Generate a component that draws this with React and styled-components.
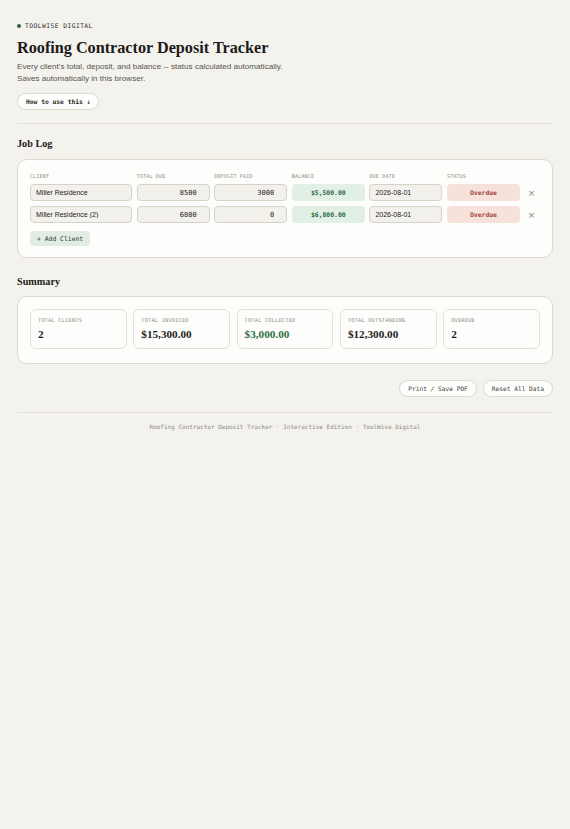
import React, { useState } from 'react'
import styled, { createGlobalStyle } from 'styled-components'

const GlobalStyle = createGlobalStyle`
  body {
    margin: 0;
    background: #f4f2ed;
    color: #1d1d1b;
    font-family: "Liberation Sans", Arial, sans-serif;
  }
`;

const mono = `"DejaVu Sans Mono", "Liberation Mono", monospace`;
const serif = `"Liberation Serif", "Times New Roman", serif`;

const Page = styled.div`
  padding: 22px 17px 40px;
`;

const Brand = styled.div`
  display: flex;
  align-items: center;
  gap: 4px;
  font-family: ${mono};
  font-size: 6.3px;
  letter-spacing: 0.45px;
  color: #2b2b28;
`;

const Dot = styled.span`
  width: 4px;
  height: 4px;
  border-radius: 50%;
  background: #2f5e43;
`;

const Title = styled.h1`
  font-family: ${serif};
  font-weight: 700;
  font-size: 16.2px;
  margin: 10px 0 3px;
  color: #1b1b19;
`;

const Lead = styled.p`
  font-size: 8.1px;
  line-height: 12px;
  color: #555450;
  margin: 0 0 5px;
`;

const PillButton = styled.button`
  font-family: ${mono};
  font-size: ${p => p.$bold ? '6.3px' : '6.2px'};
  font-weight: ${p => p.$bold ? 700 : 400};
  color: ${p => p.$bold ? '#1f1f1d' : '#45443f'};
  background: #fdfdfb;
  border: 1px solid #dcd8cc;
  border-radius: 10px;
  padding: 0 8px;
  height: 17px;
  cursor: pointer;
`;

const Divider = styled.hr`
  border: none;
  border-top: 1px solid #e2dfd6;
  margin: ${p => p.$m || '13px 0 0'};
`;

const SectionTitle = styled.h2`
  font-family: ${serif};
  font-weight: 700;
  font-size: 10.2px;
  margin: ${p => p.$m || '14px 0 10px'};
  color: #1b1b19;
`;

const Card = styled.div`
  background: #fdfdfb;
  border: 1px solid #ddd9cc;
  border-radius: 10px;
  padding: ${p => p.$pad || '12px'};
`;

const Grid = styled.div`
  display: grid;
  grid-template-columns: 102px 73px 73px 73px 73px 73px 14px;
  column-gap: 4.6px;
  row-gap: 5px;
  align-items: center;
`;

const HeadCell = styled.div`
  font-family: ${mono};
  font-size: 5px;
  letter-spacing: 0.2px;
  color: #8d8b84;
  line-height: 6px;
`;

const Field = styled.input`
  box-sizing: border-box;
  width: 100%;
  height: 17px;
  background: #f3f1eb;
  border: 1px solid #d6d2c6;
  border-radius: 4px;
  font-family: ${p => p.$mono ? mono : `"Liberation Sans", Arial, sans-serif`};
  font-size: 7px;
  text-align: ${p => p.$right ? 'right' : 'left'};
  padding: 0 ${p => p.$right ? '12px' : '5px'} 0 5px;
  color: #22221f;
  outline: none;
`;

const Chip = styled.div`
  height: 17px;
  border-radius: 4px;
  display: flex;
  align-items: center;
  justify-content: center;
  font-family: ${mono};
  font-size: 6.4px;
  font-weight: 700;
  background: ${p => p.$tone === 'bad' ? '#f6e1db' : '#e2efe5'};
  color: ${p => p.$tone === 'bad' ? '#a1443a' : '#2e6c48'};
`;

const RemoveBtn = styled.button`
  background: none;
  border: none;
  color: #8a8882;
  font-size: 9px;
  padding: 0;
  text-align: center;
  cursor: pointer;
  font-family: "DejaVu Sans", sans-serif;
`;

const AddButton = styled.button`
  margin-top: 8px;
  height: 15px;
  padding: 0 7px;
  font-family: ${mono};
  font-size: 6.4px;
  color: #2a3a30;
  background: #e1ece4;
  border: none;
  border-radius: 4px;
  cursor: pointer;
`;

const Stats = styled.div`
  display: grid;
  grid-template-columns: repeat(5, 1fr);
  gap: 6.5px;
`;

const Stat = styled.div`
  border: 1px solid #e3e0d7;
  border-radius: 6px;
  padding: 7px;
  height: 40px;
  box-sizing: border-box;
`;

const StatLabel = styled.div`
  font-family: ${mono};
  font-size: 5.3px;
  letter-spacing: 0.2px;
  color: #8d8b84;
`;

const StatValue = styled.div`
  font-family: ${serif};
  font-weight: 700;
  font-size: 11.2px;
  margin-top: 5px;
  color: ${p => p.$green ? '#2f7047' : '#1d1d1b'};
`;

const Actions = styled.div`
  display: flex;
  justify-content: flex-end;
  gap: 6px;
  margin-top: 16px;
`;

const Footer = styled.div`
  text-align: center;
  font-family: ${mono};
  font-size: 6px;
  color: #8d8b84;
  margin-top: 10px;
`;

const money = n => '$' + n.toLocaleString('en-US', { minimumFractionDigits: 2, maximumFractionDigits: 2 });

const initial = [
  { id: 1, client: 'Miller Residence', total: 8500, deposit: 3000, due: '2026-08-01' },
  { id: 2, client: 'Miller Residence (2)', total: 6800, deposit: 0, due: '2026-08-01' },
];

export default function App() {
  const [rows, setRows] = useState(initial);

  const update = (id, key, val) =>
    setRows(rs => rs.map(r => (r.id === id ? { ...r, [key]: val } : r)));

  const invoiced = rows.reduce((s, r) => s + Number(r.total || 0), 0);
  const collected = rows.reduce((s, r) => s + Number(r.deposit || 0), 0);

  return (
    <Page>
      <GlobalStyle />
      <Brand><Dot />TOOLWISE DIGITAL</Brand>
      <Title>Roofing Contractor Deposit Tracker</Title>
      <Lead>
        Every client's total, deposit, and balance -- status calculated automatically.
        <br />
        Saves automatically in this browser.
      </Lead>
      <PillButton $bold>How to use this ↓</PillButton>
      <Divider />

      <SectionTitle>Job Log</SectionTitle>
      <Card $pad="13px 12px 11px">
        <Grid>
          <HeadCell>CLIENT</HeadCell>
          <HeadCell>TOTAL DUE</HeadCell>
          <HeadCell>DEPOSIT PAID</HeadCell>
          <HeadCell>BALANCE</HeadCell>
          <HeadCell>DUE DATE</HeadCell>
          <HeadCell>STATUS</HeadCell>
          <HeadCell />
          {rows.map(r => (
            <React.Fragment key={r.id}>
              <Field value={r.client} onChange={e => update(r.id, 'client', e.target.value)} />
              <Field $mono $right value={r.total} onChange={e => update(r.id, 'total', e.target.value)} />
              <Field $mono $right value={r.deposit} onChange={e => update(r.id, 'deposit', e.target.value)} />
              <Chip>{money(r.total - r.deposit)}</Chip>
              <Field value={r.due} onChange={e => update(r.id, 'due', e.target.value)} />
              <Chip $tone="bad">Overdue</Chip>
              <RemoveBtn onClick={() => setRows(rs => rs.filter(x => x.id !== r.id))}>×</RemoveBtn>
            </React.Fragment>
          ))}
        </Grid>
        <AddButton>+ Add Client</AddButton>
      </Card>

      <SectionTitle $m="18px 0 9px">Summary</SectionTitle>
      <Card $pad="12px 12px 14px">
        <Stats>
          <Stat><StatLabel>TOTAL CLIENTS</StatLabel><StatValue>{rows.length}</StatValue></Stat>
          <Stat><StatLabel>TOTAL INVOICED</StatLabel><StatValue>{money(invoiced)}</StatValue></Stat>
          <Stat><StatLabel>TOTAL COLLECTED</StatLabel><StatValue $green>{money(collected)}</StatValue></Stat>
          <Stat><StatLabel>TOTAL OUTSTANDING</StatLabel><StatValue>{money(invoiced - collected)}</StatValue></Stat>
          <Stat><StatLabel>OVERDUE</StatLabel><StatValue>{rows.length}</StatValue></Stat>
        </Stats>
      </Card>

      <Actions>
        <PillButton>Print / Save PDF</PillButton>
        <PillButton>Reset All Data</PillButton>
      </Actions>
      <Divider $m="15px 0 0" />
      <Footer>Roofing Contractor Deposit Tracker · Interactive Edition · ToolWise Digital</Footer>
    </Page>
  );
}
